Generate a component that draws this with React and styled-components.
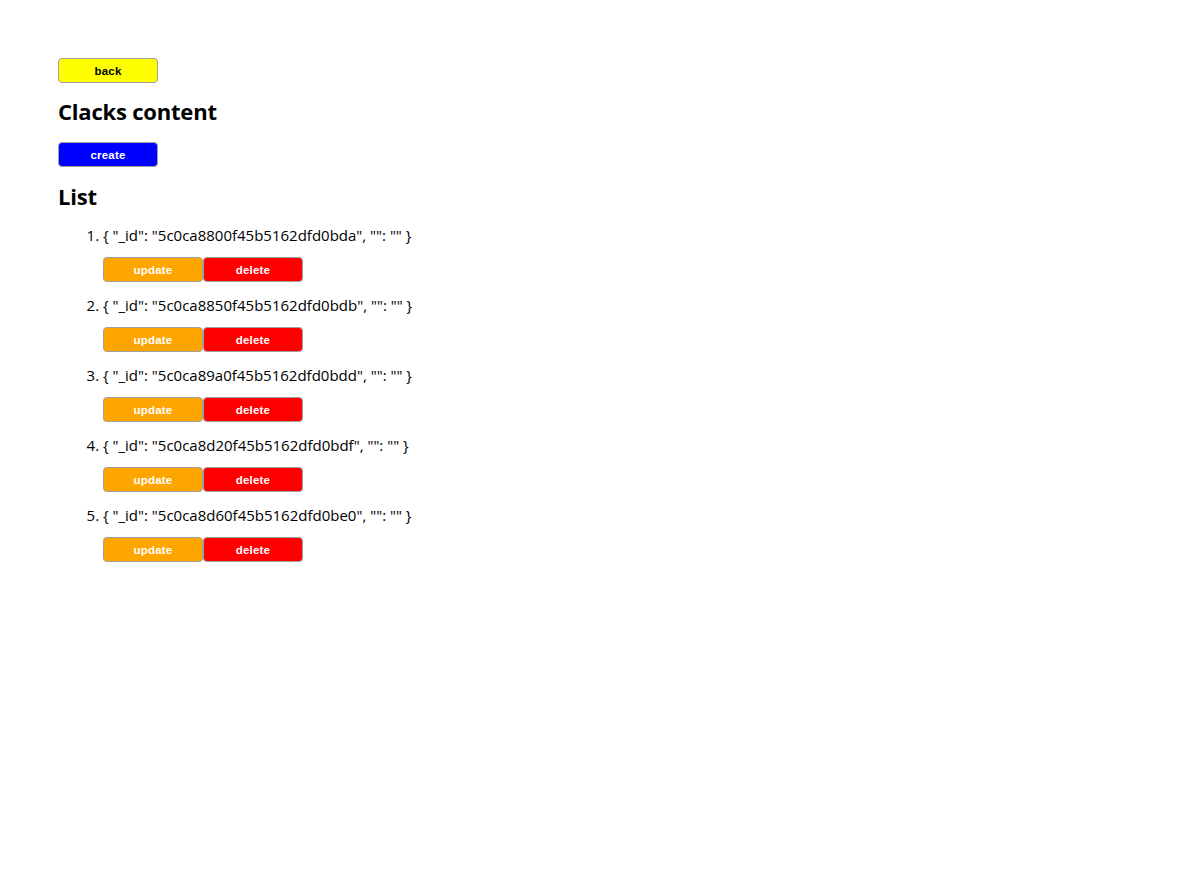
import React from 'react'
import styled, { createGlobalStyle } from 'styled-components'

const GlobalStyle = createGlobalStyle`
  body {
    margin: 0;
    background: white;
    font-family: "Open Sans", "DejaVu Sans", sans-serif;
    color: black;
  }
`

const Page = styled.div`
  padding: 58px;
`

const Button = styled.button`
  display: block;
  box-sizing: border-box;
  width: 100px;
  height: 25px;
  padding: 0;
  border: 1px solid #a0a0a0;
  border-radius: 4px;
  background-color: ${props => props.bg};
  color: ${props => props.fg || 'white'};
  font-family: "Liberation Sans", Arial, sans-serif;
  font-weight: bold;
  font-size: 11.5px;
  letter-spacing: 0.2px;
  cursor: pointer;
`

const Heading = styled.h2`
  margin: ${props => props.top || 15}px 0 17px;
  font-size: 22px;
  line-height: 27px;
  font-weight: bold;
  letter-spacing: -0.2px;
`

const List = styled.ol`
  margin: -2px 0 0;
  padding-left: 45px;
  font-size: 15px;
`

const Item = styled.li`
  line-height: 20px;
`

const Actions = styled.div`
  display: flex;
  margin: 12px 0 13px;
`

const items = [
  '5c0ca8800f45b5162dfd0bda',
  '5c0ca8850f45b5162dfd0bdb',
  '5c0ca89a0f45b5162dfd0bdd',
  '5c0ca8d20f45b5162dfd0bdf',
  '5c0ca8d60f45b5162dfd0be0'
]

export default function App() {
  return (
    <Page>
      <GlobalStyle />
      <Button bg="yellow" fg="black">back</Button>
      <Heading>Clacks content</Heading>
      <Button bg="blue">create</Button>
      <Heading top={16}>List</Heading>
      <List>
        {items.map(id => (
          <Item key={id}>
            {`{ "_id": "${id}", "": "" }`}
            <Actions>
              <Button bg="orange">update</Button>
              <Button bg="red">delete</Button>
            </Actions>
          </Item>
        ))}
      </List>
    </Page>
  )
}
